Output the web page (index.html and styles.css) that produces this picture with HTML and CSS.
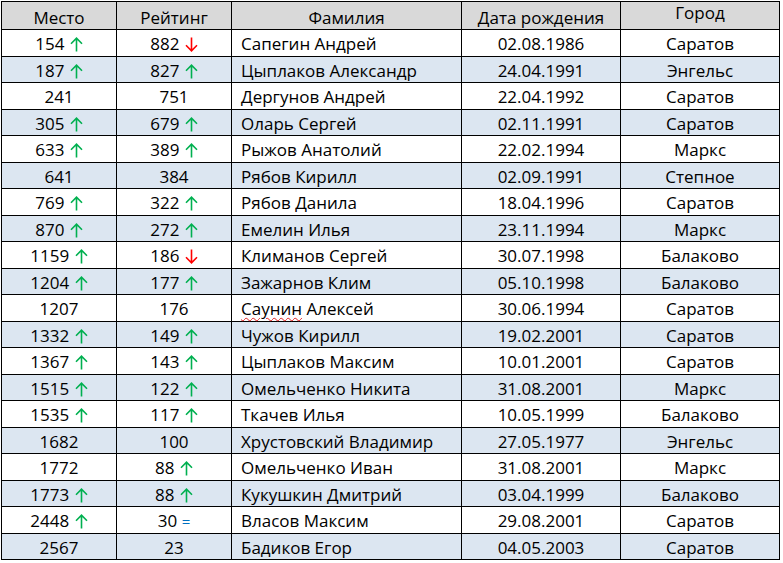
FILE: index.html
```html
<!DOCTYPE html>
<html lang="ru">
<head>
<meta charset="utf-8">
<title>Рейтинг</title>
<link rel="stylesheet" href="styles.css">
</head>
<body>
<svg width="0" height="0" class="defs">
  <defs>
    <symbol id="up" viewBox="0 0 13 15"><path d="M6.5 14.5V1.2M1 6.7L6.5 1.2L12 6.7" fill="none" stroke="currentColor" stroke-width="1.6"/></symbol>
    <symbol id="down" viewBox="0 0 13 15"><path d="M6.5 0.5V13.8M1 8.3L6.5 13.8L12 8.3" fill="none" stroke="currentColor" stroke-width="1.6"/></symbol>
  </defs>
</svg>
<table class="grid">
  <colgroup>
    <col class="c-place"><col class="c-rating"><col class="c-name"><col class="c-date"><col class="c-city">
  </colgroup>
  <thead>
    <tr><th>Место</th><th>Рейтинг</th><th>Фамилия</th><th>Дата рождения</th><th class="top">Город</th></tr>
  </thead>
  <tbody>
    <tr><td>154 <svg class="ar up"><use href="#up"/></svg></td><td>882 <svg class="ar down"><use href="#down"/></svg></td><td class="name">Сапегин Андрей</td><td>02.08.1986</td><td>Саратов</td></tr>
    <tr><td>187 <svg class="ar up"><use href="#up"/></svg></td><td>827 <svg class="ar up"><use href="#up"/></svg></td><td class="name">Цыплаков Александр</td><td>24.04.1991</td><td>Энгельс</td></tr>
    <tr><td>241</td><td>751</td><td class="name">Дергунов Андрей</td><td>22.04.1992</td><td>Саратов</td></tr>
    <tr><td>305 <svg class="ar up"><use href="#up"/></svg></td><td>679 <svg class="ar up"><use href="#up"/></svg></td><td class="name">Оларь Сергей</td><td>02.11.1991</td><td>Саратов</td></tr>
    <tr><td>633 <svg class="ar up"><use href="#up"/></svg></td><td>389 <svg class="ar up"><use href="#up"/></svg></td><td class="name">Рыжов Анатолий</td><td>22.02.1994</td><td>Маркс</td></tr>
    <tr><td>641</td><td>384</td><td class="name">Рябов Кирилл</td><td>02.09.1991</td><td>Степное</td></tr>
    <tr><td>769 <svg class="ar up"><use href="#up"/></svg></td><td>322 <svg class="ar up"><use href="#up"/></svg></td><td class="name">Рябов Данила</td><td>18.04.1996</td><td>Саратов</td></tr>
    <tr><td>870 <svg class="ar up"><use href="#up"/></svg></td><td>272 <svg class="ar up"><use href="#up"/></svg></td><td class="name">Емелин Илья</td><td>23.11.1994</td><td>Маркс</td></tr>
    <tr><td>1159 <svg class="ar up"><use href="#up"/></svg></td><td>186 <svg class="ar down"><use href="#down"/></svg></td><td class="name">Климанов Сергей</td><td>30.07.1998</td><td>Балаково</td></tr>
    <tr><td>1204 <svg class="ar up"><use href="#up"/></svg></td><td>177 <svg class="ar up"><use href="#up"/></svg></td><td class="name">Зажарнов Клим</td><td>05.10.1998</td><td>Балаково</td></tr>
    <tr><td>1207</td><td>176</td><td class="name"><span class="spell">Саунин</span> Алексей</td><td>30.06.1994</td><td>Саратов</td></tr>
    <tr><td>1332 <svg class="ar up"><use href="#up"/></svg></td><td>149 <svg class="ar up"><use href="#up"/></svg></td><td class="name">Чужов Кирилл</td><td>19.02.2001</td><td>Саратов</td></tr>
    <tr><td>1367 <svg class="ar up"><use href="#up"/></svg></td><td>143 <svg class="ar up"><use href="#up"/></svg></td><td class="name">Цыплаков Максим</td><td>10.01.2001</td><td>Саратов</td></tr>
    <tr><td>1515 <svg class="ar up"><use href="#up"/></svg></td><td>122 <svg class="ar up"><use href="#up"/></svg></td><td class="name">Омельченко Никита</td><td>31.08.2001</td><td>Маркс</td></tr>
    <tr><td>1535 <svg class="ar up"><use href="#up"/></svg></td><td>117 <svg class="ar up"><use href="#up"/></svg></td><td class="name">Ткачев Илья</td><td>10.05.1999</td><td>Балаково</td></tr>
    <tr><td>1682</td><td>100</td><td class="name">Хрустовский Владимир</td><td>27.05.1977</td><td>Энгельс</td></tr>
    <tr><td>1772</td><td>88 <svg class="ar up"><use href="#up"/></svg></td><td class="name">Омельченко Иван</td><td>31.08.2001</td><td>Маркс</td></tr>
    <tr><td>1773 <svg class="ar up"><use href="#up"/></svg></td><td>88 <svg class="ar up"><use href="#up"/></svg></td><td class="name">Кукушкин Дмитрий</td><td>03.04.1999</td><td>Балаково</td></tr>
    <tr><td>2448 <svg class="ar up"><use href="#up"/></svg></td><td>30 <span class="eq">=</span></td><td class="name">Власов Максим</td><td>29.08.2001</td><td>Саратов</td></tr>
    <tr><td>2567</td><td>23</td><td class="name">Бадиков Егор</td><td>04.05.2003</td><td>Саратов</td></tr>
  </tbody>
</table>
</body>
</html>
```

FILE: styles.css
```css
html, body {
  margin: 0;
  padding: 0;
  background: #ffffff;
}

body {
  padding: 1px 0 0 1px;
  font-family: "Open Sans", "Noto Sans", sans-serif;
  font-size: 17px;
  color: #000000;
}

.defs {
  position: absolute;
  width: 0;
  height: 0;
}

.grid {
  border-collapse: collapse;
  table-layout: fixed;
  width: 779px;
}

.c-place { width: 115px; }
.c-rating { width: 115px; }
.c-name { width: 230px; }
.c-date { width: 159px; }
.c-city { width: 159px; }

.grid th,
.grid td {
  border: 1px solid #000000;
  padding: 0;
  text-align: center;
  white-space: nowrap;
  line-height: 20px;
}

.grid th {
  height: 28px;
  background: #d9d9d9;
  font-weight: normal;
  vertical-align: middle;
  padding-top: 4px;
  box-sizing: border-box;
}

.grid thead th.top {
  vertical-align: top;
  padding-top: 1px;
}

.grid td {
  height: 26.5px;
  box-sizing: border-box;
  vertical-align: middle;
  padding-top: 3px;
}

.grid tbody tr:nth-child(even) td {
  background: #dce6f1;
}

.grid td.name {
  text-align: left;
  padding-left: 9px;
}

.ar {
  width: 13px;
  height: 15px;
  vertical-align: -2px;
  margin-left: 1px;
}

.ar.up { color: #00b050; }
.ar.down { color: #ff0000; }

.eq {
  color: #0070c0;
  font-size: 15px;
}

.spell {
  text-decoration-line: underline;
  text-decoration-style: wavy;
  text-decoration-color: #e02020;
  text-decoration-thickness: 1px;
  text-underline-offset: 2px;
}
```
